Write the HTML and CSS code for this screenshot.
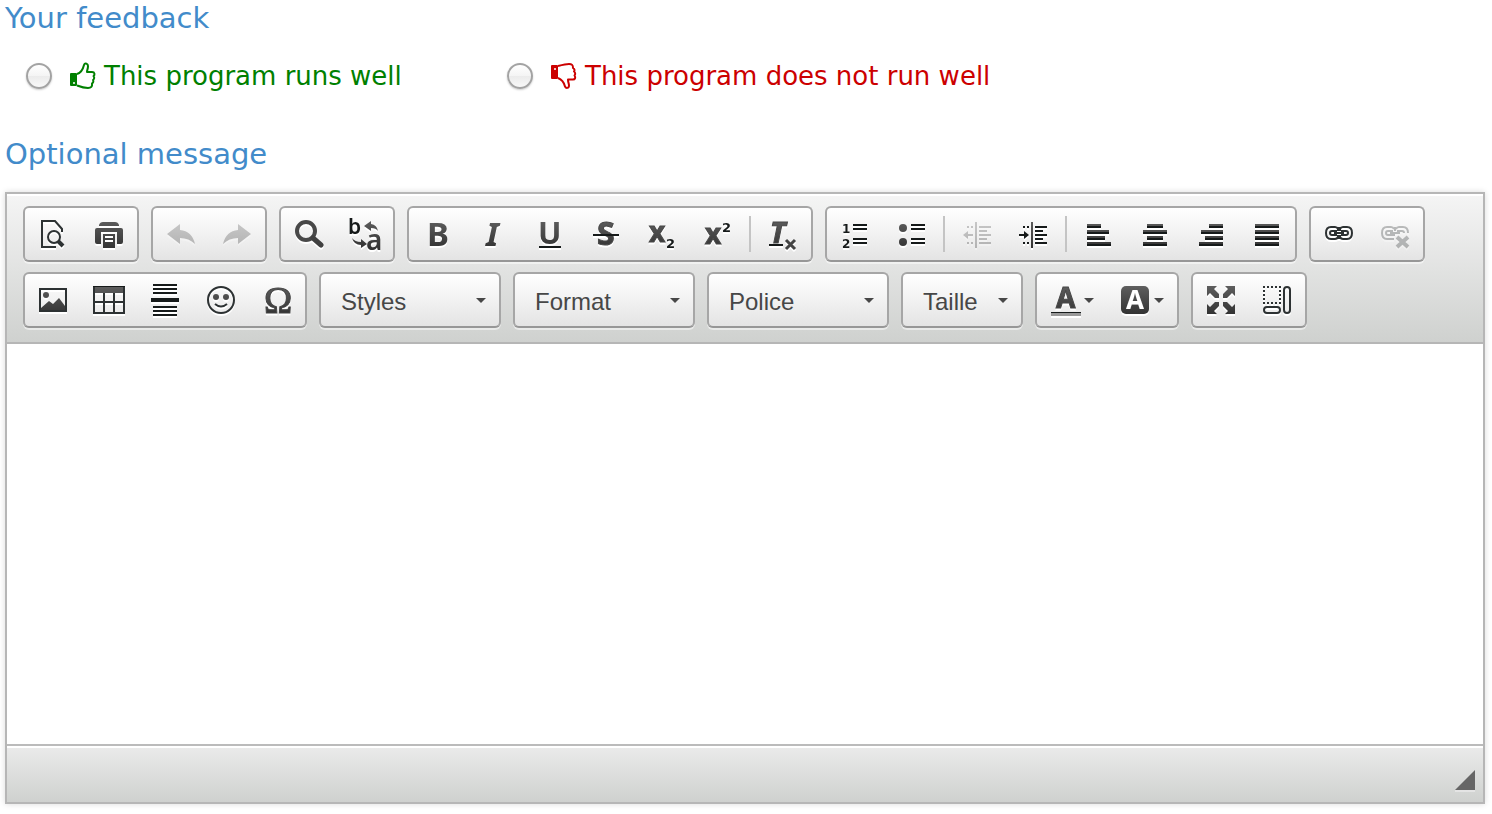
FILE: index.html
```
<!DOCTYPE html>
<html lang="en">
  <head>
    <meta charset="UTF-8" />
    <title>Feedback</title>
    <link rel="stylesheet" href="styles.css">
  </head>
  <body>
    <!-- shared icon gradient -->
    <svg class="defs" width="0" height="0" aria-hidden="true">
      <defs>
        <linearGradient id="ink" gradientUnits="userSpaceOnUse" x1="0" y1="2" x2="0" y2="30">
          <stop offset="0" stop-color="#5e5e5e" />
          <stop offset="1" stop-color="#333" />
        </linearGradient>
      </defs>
    </svg>

    <form class="feedback">
      <h2 class="heading">Your feedback</h2>
      <div class="choices">
        <label class="choice good">
          <input type="radio" name="result" value="ok">
          <svg class="thumb" viewBox="0 0 26 28">
            <path d="M1 12h5v11H1z" fill="currentColor" />
            <path d="M7 12c4-1 6-5 7-9 1-3 4-1 4 1 0 3-1 4-1 6h5c3 0 3 3 1.500 4 1 1 1 3-.5 4 1 1 0 3-1 3.500 .5 3-1 4.500-4 4.500-4 0-7-1-11-2.500" />
            <circle class="dot" cx="4" cy="21" r="1" />
          </svg>
          <span>This program runs well</span>
        </label>
        <label class="choice bad">
          <input type="radio" name="result" value="ko">
          <svg class="thumb" viewBox="0 0 26 28">
            <path d="M1 4h5v12H1z" fill="currentColor" />
            <path d="M7 4c4-1 8-2 11-2 4 0 4 2 4 4 1.500 1 2 2 1 3.500 1.500 1 1.500 3 .5 4 1.500 2 .5 4-1.500 4h-5c0 3 1 4 1 6 0 3-3 3-4 1-1-4-3-7-7-8.500" />
            <circle class="dot" cx="4" cy="7" r="1" />
          </svg>
          <span>This program does not run well</span>
        </label>
      </div>

      <h2 class="heading"><label for="message">Optional message</label></h2>
      <div class="editor">
        <div class="toolbar">
          <div class="group">
            <button type="button" title="Preview"><svg viewBox="0 0 32 32"><path class="line" d="M25 14V11l-7-8H5v26h14" /><circle class="line" cx="17" cy="19" r="6" /><path class="line thick" d="M21 23l5 5" /></svg></button>
            <button type="button" title="Print"><svg viewBox="0 0 32 32"><path d="M6 7q1-3 4-3h12q3 0 4 3v1H6zM4 10h24q2 0 2 2v12q0 2-2 2h-4V14H8v12H4q-2 0-2-2V12q0-2 2-2z" /><path d="M10 16h12v14H10z" /><path class="cut" d="M12 19h8M12 23h8" /></svg></button>
          </div>
          <div class="group">
            <button type="button" title="Undo" disabled><svg viewBox="0 0 32 32"><path d="M2 16L15 6v6q12 1 15 14-6-6-15-6v6z" /></svg></button>
            <button type="button" title="Redo" disabled><svg viewBox="0 0 32 32"><path d="M30 16L17 6v6Q5 13 2 26q6-6 15-6v6z" /></svg></button>
          </div>
          <div class="group">
            <button type="button" title="Find"><svg viewBox="0 0 32 32"><circle class="line ring" cx="13" cy="13" r="9" /><path class="line handle" d="M20 20l8 7" /></svg></button>
            <button type="button" title="Replace"><svg viewBox="0 0 32 32"><text class="dark semi" x="-1" y="16" font-size="21">b</text><text class="semi" x="17" y="32" font-size="28">a</text><path d="M15 8l7-5v3q6 1 7 7-2-3-7-3v3zM18 26l-6 4v-3q-7 0-9-7 3 4 9 4v-3z" /></svg></button>
          </div>
          <div class="group">
            <button type="button" title="Bold"><svg viewBox="0 0 32 32"><text class="bold" x="6" y="28" font-size="33">B</text></svg></button>
            <button type="button" title="Italic"><svg viewBox="0 0 32 32"><text class="bold italic" x="9" y="28" font-size="33">I</text></svg></button>
            <button type="button" title="Underline"><svg viewBox="0 0 32 32"><text class="bold" x="5" y="26" font-size="31">U</text><path class="dark" d="M6 28h22v2H6z" /></svg></button>
            <button type="button" title="Strikethrough"><svg viewBox="0 0 32 32"><text class="bold heavy" x="8" y="27" font-size="32">S</text><path class="dark" d="M4 16h26v2H4z" /></svg></button>
            <button type="button" title="Subscript"><svg viewBox="0 0 32 32"><text class="bold heavy" x="4" y="24" font-size="28">x</text><text class="number" x="21" y="30" font-size="13">2</text></svg></button>
            <button type="button" title="Superscript"><svg viewBox="0 0 32 32"><text class="bold heavy" x="4" y="26" font-size="28">x</text><text class="number" x="21" y="14" font-size="13">2</text></svg></button>
            <span class="separator"></span>
            <button type="button" title="Remove format"><svg viewBox="0 0 32 32"><text class="bold italic heavy" x="3" y="25" font-size="29">T</text><path class="dark" d="M2 26h14v2H2z" /><path class="line cross" d="M19 22l9 9M28 22l-9 9" /></svg></button>
          </div>
          <div class="group">
            <button type="button" title="Numbered list"><svg viewBox="0 0 32 32"><text class="number" x="3" y="15" font-size="12">1</text><text class="number" x="3" y="30" font-size="12">2</text><path class="dark" d="M14 6h14v2H14zM14 10h14v2H14zM14 20h14v2H14zM14 24h14v2H14z" /></svg></button>
            <button type="button" title="Bulleted list"><svg viewBox="0 0 32 32"><circle cx="8" cy="10" r="4" /><circle cx="8" cy="24" r="4" /><path class="dark" d="M16 6h14v2H16zM16 10h14v2H16zM16 20h14v2H16zM16 24h14v2H16z" /></svg></button>
            <span class="separator"></span>
            <button type="button" title="Decrease indent" disabled><svg viewBox="0 0 32 32"><path d="M14 4h2v26h-2zM18 8h12v2H18zM18 12h8v2h-8zM18 16h12v2H18zM18 20h8v2h-8zM18 24h12v2H18zM6 8h2v2H6zM10 8h2v2h-2zM6 24h2v2H6zM10 24h2v2h-2zM2 17l5-4v3h5v2H7v3z" /></svg></button>
            <button type="button" title="Increase indent"><svg viewBox="0 0 32 32"><path class="dark" d="M18 8h12v2H18zM18 12h8v2h-8zM18 16h12v2H18zM18 20h8v2h-8zM18 24h12v2H18zM6 8h2v2H6zM10 8h2v2h-2zM6 24h2v2H6zM10 24h2v2h-2zM12 17l-5-4v3H2v2h5v3z" /><path d="M14 4h2v26h-2z" /></svg></button>
            <span class="separator"></span>
            <button type="button" title="Align left"><svg viewBox="0 0 32 32"><path d="M4 6h14v4H4zM4 12h22v4H4zM4 18h18v4H4zM4 24h24v4H4z" /><path class="dark" d="M4 8h14v2H4zM4 14h22v2H4zM4 20h18v2H4zM4 26h24v2H4z" /></svg></button>
            <button type="button" title="Center"><svg viewBox="0 0 32 32"><path d="M8 6h16v4H8zM4 12h24v4H4zM8 18h16v4H8zM4 24h24v4H4z" /><path class="dark" d="M8 8h16v2H8zM4 14h24v2H4zM8 20h16v2H8zM4 26h24v2H4z" /></svg></button>
            <button type="button" title="Align right"><svg viewBox="0 0 32 32"><path d="M14 6h14v4H14zM6 12h22v4H6zM10 18h18v4H10zM4 24h24v4H4z" /><path class="dark" d="M14 8h14v2H14zM6 14h22v2H6zM10 20h18v2H10zM4 26h24v2H4z" /></svg></button>
            <button type="button" title="Justify"><svg viewBox="0 0 32 32"><path d="M4 6h24v4H4zM4 12h24v4H4zM4 18h24v4H4zM4 24h24v4H4z" /><path class="dark" d="M4 8h24v2H4zM4 14h24v2H4zM4 20h24v2H4zM4 26h24v2H4z" /></svg></button>
          </div>
          <div class="group">
            <button type="button" title="Link"><svg viewBox="0 0 32 32"><path class="line" d="M15 11q-1-2-3-2H8q-5 0-5 6t5 6h4q2 0 3-2M17 11q1-2 3-2h4q5 0 5 6t-5 6h-4q-2 0-3-2" /><path class="line" d="M14 13H9q-2 0-2 2t2 2h5M18 13h5q2 0 2 2t-2 2h-5M11 15h10M15 9v4M17 9v4M15 17v4M17 17v4" /></svg></button>
            <button type="button" title="Unlink" disabled><svg viewBox="0 0 32 32"><path class="line" d="M15 11q-1-2-3-2H8q-5 0-5 6t5 6h7M17 11q1-2 3-2h4q5 0 5 6M14 13H9q-2 0-2 2t2 2h7M18 13h5q2 0 2 2M11 15h10M16 9v4" /><path class="line thick" d="M18 19l11 10M29 19L18 29" /></svg></button>
          </div>
          <div class="group">
            <button type="button" title="Image"><svg viewBox="0 0 32 32"><path class="line" d="M3 5h26v22H3z" /><circle cx="9" cy="11" r="3" /><path d="M4 26V24l8-7 4 3 6-6 6 8v4z" /></svg></button>
            <button type="button" title="Table"><svg viewBox="0 0 32 32"><path d="M0 2h32v7H0z" /><path class="line" d="M1 3v26h30V3M11 9v20M21 9v20M1 18h30" /><path class="dark" d="M0 2h32v1H0z" /></svg></button>
            <button type="button" title="Page break"><svg viewBox="0 0 32 32"><path class="dark" d="M4 0h24v2H4zM4 4h24v2H4zM4 8h24v2H4zM4 22h24v2H4zM4 26h24v2H4zM4 30h24v2H4zM2 14h28v4H2z" /></svg></button>
            <button type="button" title="Smiley"><svg viewBox="0 0 32 32"><circle class="line" cx="16" cy="16" r="13" /><circle cx="11" cy="13" r="3" /><circle cx="21" cy="13" r="3" /><path class="line" d="M10 20q6 5 12 0" /></svg></button>
            <button type="button" title="Special character"><svg viewBox="0 0 32 32"><text class="omega" x="3" y="29" font-size="38">Ω</text></svg></button>
          </div>
          <div class="group combo">
            <select aria-label="Styles"><option>Styles</option></select>
            <span class="caret"></span>
          </div>
          <div class="group combo">
            <select aria-label="Format"><option>Format</option></select>
            <span class="caret"></span>
          </div>
          <div class="group combo">
            <select aria-label="Police"><option>Police</option></select>
            <span class="caret"></span>
          </div>
          <div class="group combo small">
            <select aria-label="Taille"><option>Taille</option></select>
            <span class="caret"></span>
          </div>
          <div class="group">
            <button type="button" class="menu" title="Text color"><svg viewBox="0 0 32 32"><text class="bold heavy" x="7" y="24" font-size="28">A</text><path class="dark" d="M2 28h30v1H2z" /><path class="shade" d="M2 29h30v3H2z" /></svg><span class="caret"></span></button>
            <button type="button" class="menu" title="Background color"><svg viewBox="0 0 32 32"><rect x="2" y="2" width="28" height="28" rx="5" /><text class="bold white" x="7" y="25" font-size="26">A</text></svg><span class="caret"></span></button>
          </div>
          <div class="group">
            <button type="button" title="Maximize"><svg viewBox="0 0 32 32"><path d="M2 2h10L9 5l5 5v4h-4L5 9l-3 3zM30 2H20l3 3-5 5v4h4l5-5 3 3zM2 30h10l-3-3 5-5v-4h-4l-5 5-3-3zM30 30H20l3-3-5-5v-4h4l5 5 3-3z" /></svg></button>
            <button type="button" title="Show blocks"><svg viewBox="0 0 32 32"><path class="line" d="M2 3h18M2 19h18M3 6v12M19 6v12" stroke-dasharray="2 2" /><rect class="line" x="3" y="23" width="16" height="6" rx="3" /><rect class="line" x="23" y="3" width="6" height="26" rx="3" /></svg></button>
          </div>
        </div>
        <textarea id="message" name="message"></textarea>
        <div class="footer"><span class="resizer"></span></div>
      </div>
    </form>
  </body>
</html>
```

FILE: styles.css
```
body {
	margin: 0;
	background: white;
	font-family: "DejaVu Sans", sans-serif;
}

.defs {
	position: absolute;
}

.feedback {
	padding: 0 7px 10px 5px;
}

.heading {
	margin: 0;
	color: #428bca;
	font-size: 29px;
	font-weight: normal;
	line-height: 36px;
}

.choices {
	display: flex;
	padding: 22px 21px 42px;
}

.choice {
	display: flex;
	align-items: center;
	min-width: 481px;
	font-size: 26px;
	line-height: 36px;
}

.good {
	color: #008000;
}

.bad {
	color: #cc0000;
}

.choice input {
	appearance: none;
	width: 26px;
	height: 26px;
	margin: 0 18px 0 0;
	border: 2px solid #a3a3a3;
	border-radius: 50%;
	background: linear-gradient(#fff, #f4f4f4 50%, #ebebeb 51%, #f8f8f8);
	box-shadow: 0 1px 2px rgba(0, 0, 0, 0.2);
}

.choice input:checked {
	background: radial-gradient(#444 35%, #f4f4f4 40%);
}

.thumb {
	width: 26px;
	height: 28px;
	margin-right: 8px;
	fill: none;
	stroke: currentColor;
	stroke-width: 2;
	stroke-linejoin: round;
}

.thumb .dot {
	fill: white;
	stroke: none;
}

/* editor */
.editor {
	margin-top: 20px;
	border: 2px solid #b6b6b6;
	box-shadow: 0 0 6px rgba(0, 0, 0, 0.15);
}

.toolbar {
	display: flex;
	flex-wrap: wrap;
	gap: 10px 12px;
	padding: 12px 16px 14px;
	border-bottom: 2px solid #b6b6b6;
	background: linear-gradient(#f5f5f5, #cfd1cf);
	box-shadow: inset 0 2px 0 white;
}

.group {
	display: flex;
	align-items: center;
	box-sizing: border-box;
	height: 56px;
	border: 2px solid #a6a6a6;
	border-bottom-color: #979797;
	border-radius: 6px;
	background: linear-gradient(#fff, #e4e4e4);
	box-shadow: 0 2px 0 rgba(255, 255, 255, 0.5);
}

.group button {
	display: flex;
	align-items: center;
	justify-content: center;
	width: 56px;
	height: 52px;
	padding: 0;
	border: none;
	background: none;
	cursor: pointer;
}

.group button:hover {
	background: rgba(0, 0, 0, 0.06);
}

.group button:disabled {
	opacity: 0.3;
	cursor: default;
}

.group .menu {
	justify-content: flex-start;
	gap: 3px;
	width: 70px;
	padding-left: 12px;
}

.group svg {
	width: 32px;
	height: 32px;
	overflow: visible;
	fill: url(#ink);
	font-family: "Noto Sans", sans-serif;
	filter: drop-shadow(0 2px 0 white);
}

.group .line {
	fill: none;
	stroke: #2d3233;
	stroke-width: 2;
}

.group .thick {
	stroke-width: 4;
}

.group .cross {
	stroke: #444;
	stroke-width: 3;
}

.group .ring {
	stroke: #484848;
	stroke-width: 4;
}

.group .handle {
	stroke: #404040;
	stroke-width: 5;
	stroke-linecap: round;
}

.cut {
	stroke: white;
	stroke-width: 2;
}

.dark {
	fill: #161a1a;
}

.shade {
	fill: #999;
}

.white {
	fill: white;
}

.semi {
	font-weight: 600;
}

.bold {
	font-weight: bold;
}

.heavy {
	stroke: #484848;
	stroke-width: 1;
}

.italic {
	font-style: italic;
}

.number {
	fill: #161a1a;
	font-family: "DejaVu Sans", sans-serif;
	font-weight: bold;
}

.omega {
	stroke: #444;
	stroke-width: 1;
	font-family: "Liberation Serif", serif;
}

.separator {
	width: 2px;
	height: 36px;
	margin: 0 4px;
	background: #c4c4c4;
}

.combo {
	position: relative;
	width: 182px;
}

.combo.small {
	width: 122px;
}

.combo select {
	appearance: none;
	width: 100%;
	height: 52px;
	padding: 2px 20px 0;
	border: none;
	background: none;
	color: #474747;
	font-family: "Liberation Sans", sans-serif;
	font-size: 24px;
}

.caret {
	border: 5px solid transparent;
	border-top-color: #474747;
	border-bottom: none;
}

.combo .caret {
	position: absolute;
	top: 24px;
	right: 13px;
	pointer-events: none;
}

textarea {
	display: block;
	box-sizing: border-box;
	width: 100%;
	height: 400px;
	padding: 20px;
	border: none;
	outline: none;
	resize: none;
	font-family: "Liberation Sans", sans-serif;
	font-size: 24px;
}

.footer {
	display: flex;
	justify-content: flex-end;
	align-items: flex-end;
	height: 44px;
	padding: 0 8px 12px;
	border-top: 2px solid #bbb;
	background: linear-gradient(#ebebeb, #cfd1cf);
	box-shadow: inset 0 2px 0 white;
}

.resizer {
	border-left: 20px solid transparent;
	border-bottom: 20px solid #666;
	box-shadow: 0 2px 0 #e4e4e4;
	cursor: nwse-resize;
}
```
